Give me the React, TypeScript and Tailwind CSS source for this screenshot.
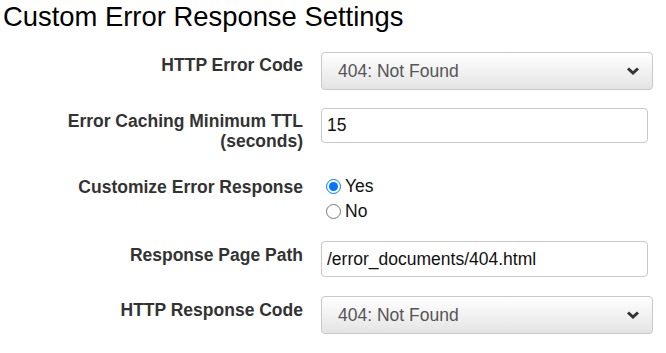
import React from "react";

function Chevron() {
  return (
    <svg width="14" height="10" viewBox="0 0 14 10" className="shrink-0">
      <path d="M2 2.5 L7 7 L12 2.5" fill="none" stroke="#333" strokeWidth="3" strokeLinecap="butt" strokeLinejoin="miter" />
    </svg>
  );
}

function Select({ value }: { value: string }) {
  return (
    <div className="flex h-[38px] w-[332px] items-center justify-between rounded-[4px] border border-[#c8c8c8] bg-linear-to-b from-white to-[#e4e4e4] pl-[16px] pr-[12px] text-[17.5px] leading-5 text-[#555]">
      <span>{value}</span>
      <Chevron />
    </div>
  );
}

function TextInput({ value, h }: { value: string; h: string }) {
  return (
    <input
      type="text"
      defaultValue={value}
      className={`${h} w-[327px] rounded-[4px] border border-[#c8c8c8] bg-white px-[5px] text-[17.5px] text-[#111] outline-none`}
    />
  );
}

function Label({ children, pt }: { children: React.ReactNode; pt: string }) {
  return (
    <div className={`w-[303px] shrink-0 text-right text-[17.5px] font-bold leading-5 text-[#333] ${pt}`}>
      {children}
    </div>
  );
}

export default function App() {
  return (
    <div className="h-[353px] w-[666px] bg-white font-['Liberation_Sans',Arial,sans-serif]">
      <h3 className="pl-[3px] pt-[3px] text-[27.4px] leading-[28px] text-black">Custom Error Response Settings</h3>

      <div className="mt-[21px] flex gap-[18px]">
        <Label pt="pt-[3px]">HTTP Error Code</Label>
        <Select value="404: Not Found" />
      </div>

      <div className="mt-[18px] flex gap-[18px]">
        <Label pt="pt-[3px]">
          Error Caching Minimum TTL
          <br />
          (seconds)
        </Label>
        <TextInput value="15" h="h-[35px]" />
      </div>

      <div className="mt-[23px] flex gap-[18px]">
        <Label pt="pt-[3px]">Customize Error Response</Label>
        <div className="flex flex-col text-[17.5px] leading-[25px] text-[#111]">
          <label className="flex h-[25px] items-center">
            <input type="radio" name="custom" defaultChecked className="m-0 ml-[5px] mr-[4px] h-[15px] w-[15px]" />
            Yes
          </label>
          <label className="flex h-[25px] items-center">
            <input type="radio" name="custom" className="m-0 ml-[5px] mr-[4px] h-[15px] w-[15px]" />
            No
          </label>
        </div>
      </div>

      <div className="mt-[17px] flex gap-[18px]">
        <Label pt="pt-[4px]">Response Page Path</Label>
        <TextInput value="/error_documents/404.html" h="h-[36px]" />
      </div>

      <div className="mt-[19px] flex gap-[18px]">
        <Label pt="pt-[4px]">HTTP Response Code</Label>
        <Select value="404: Not Found" />
      </div>
    </div>
  );
}
